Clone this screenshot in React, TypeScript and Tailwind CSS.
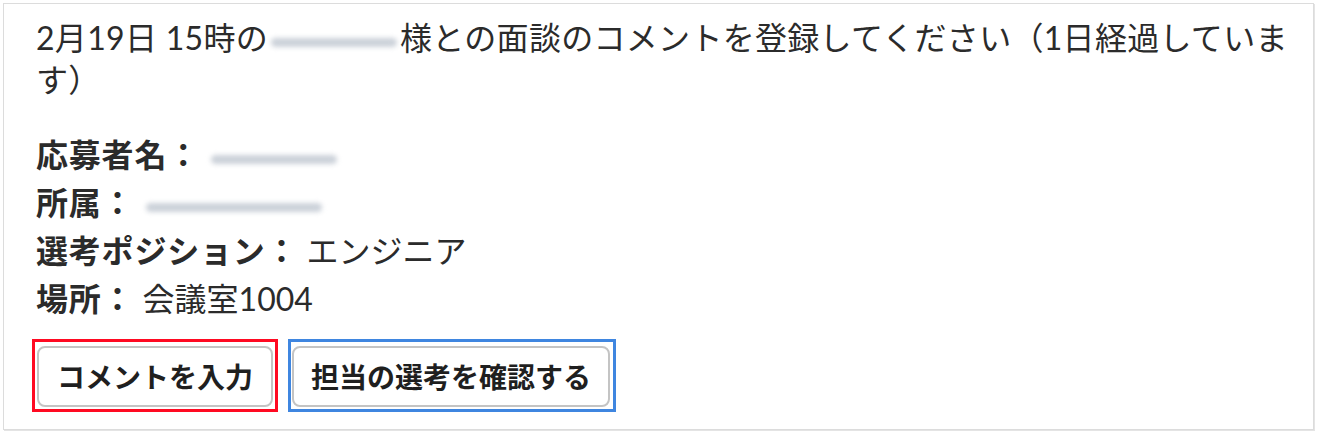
import React from "react";

function Blur({ w }: { w: number }) {
  return (
    <span
      className="inline-block align-middle relative h-[14px]"
      style={{ width: w }}
    >
      <span className="absolute left-[3px] right-[3px] top-[3px] h-[9px] rounded-full bg-[#cbd1d9] blur-[2.5px]" />
    </span>
  );
}

export default function App() {
  return (
    <div
      className="w-[1317px] h-[434px] bg-white p-[3px] pb-[4px] text-[#2b2b2b]"
      style={{ fontFamily: 'Lato, "Noto Sans CJK JP", sans-serif' }}
    >
      <div className="h-full border border-[#dcdcdc] shadow-[1px_1px_0_#e4e4e4] pl-[32px] pr-[12px] pt-[13px]">
        <p className="text-[32px] leading-[42px] tracking-[0.3px]">
          2月19日 15時の<Blur w={132} />様との面談のコメントを登録してください（1日経過しています）
        </p>
        <div className="mt-[30px] text-[32px] leading-[48px]">
          <div>
            <span className="font-bold tracking-[0.8px]">応募者名：</span> <Blur w={132} />
          </div>
          <div>
            <span className="font-bold tracking-[0.8px]">所属：</span> <Blur w={182} />
          </div>
          <div>
            <span className="font-bold tracking-[0.8px]">選考ポジション：</span> エンジニア
          </div>
          <div>
            <span className="font-bold tracking-[0.8px]">場所：</span> 会議室1004
          </div>
        </div>
        <div className="mt-[16px] flex gap-[10px] -ml-[4px]">
          <div className="border-[3px] border-[#ff0a22] pt-[4px] pb-[2px] px-[2px]">
            <button className="h-[61px] w-[236px] rounded-[8px] border-2 border-[#c4c4c4] bg-white text-[28px] font-bold text-[#1f1f1f]">
              コメントを入力
            </button>
          </div>
          <div className="border-[3px] border-[#3f86e0] pt-[4px] pb-[2px] pl-[1px] pr-[3px]">
            <button className="h-[61px] w-[318px] rounded-[8px] border-2 border-[#c4c4c4] bg-white text-[28px] font-bold text-[#1f1f1f]">
              担当の選考を確認する
            </button>
          </div>
        </div>
      </div>
    </div>
  );
}
